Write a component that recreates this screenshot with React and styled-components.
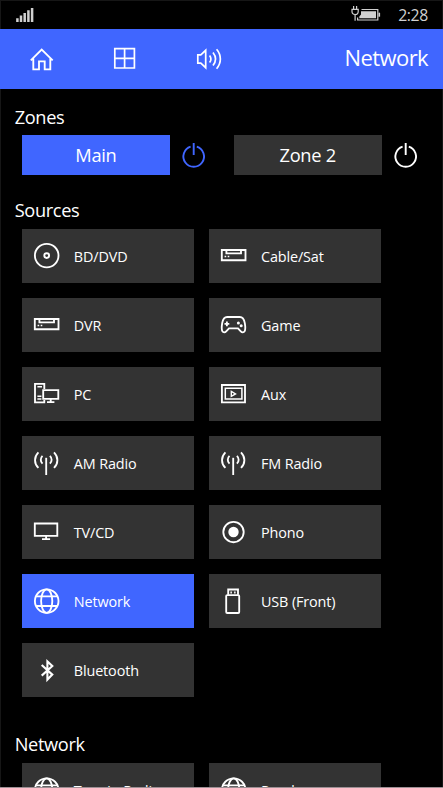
import styled, { createGlobalStyle } from "styled-components";

const GlobalStyle = createGlobalStyle`
* {
    box-sizing: border-box;
}
body {
    margin: 0;
    background: #000;
    overflow: hidden;
}
button {
    border: none;
    margin: 0;
    padding: 0;
    background: none;
    font: inherit;
    color: inherit;
}
`

const Screen = styled.div`
    display: flex;
    flex-direction: column;
    width: 443px;
    height: 788px;
    overflow: hidden;
    background: #000;
    color: #fff;
    font-family: "Open Sans", "Noto Sans", sans-serif;
    box-shadow: inset 1px 1px 0 #161616, inset -1px 0 0 #161616;
    border-bottom: 1px solid #9c8f94;
`
const StatusBar = styled.div`
    display: flex;
    flex: none;
    justify-content: space-between;
    height: 29.3px;
    padding: 0 15px 0 16px;
    color: #d0d0d0;
`
const StatusRight = styled.div`
    display: flex;
    gap: 17px;
`
const Clock = styled.span`
    font-size: 15.8px;
    line-height: 30px;
    letter-spacing: -0.35px;
`
const Header = styled.header`
    display: flex;
    flex: none;
    justify-content: space-between;
    height: 59.3px;
    padding: 0 15px 0 28px;
    background: #4066ff;
`
const HeaderNav = styled.nav`
    display: flex;
    align-items: center;
    gap: 55px;
`
const Title = styled.h1`
    margin: 0;
    font-size: 22px;
    font-weight: 400;
    line-height: 57px;
    letter-spacing: -0.6px;
`
const Section = styled.section`
    flex: none;
    padding: ${props => props.top}px 0 0 22px;
`
const Heading = styled.h2`
    margin: 0 0 ${props => props.gap}px -7.3px;
    font-size: 18.2px;
    font-weight: 400;
    line-height: 24px;
    letter-spacing: -0.35px;
`
const ZoneRow = styled.div`
    display: flex;
    gap: 26.4px;
`
const Zone = styled.div`
    display: flex;
    align-items: center;
    gap: 10.5px;
    width: 185.4px;
`
const ZoneButton = styled.button`
    width: 147.8px;
    height: 39.7px;
    background: ${props => props.$active ? "#4066ff" : "#333"};
    font-size: 18.3px;
    line-height: 38px;
    letter-spacing: -0.3px;
`
const PowerButton = styled.button`
    display: flex;
    color: ${props => props.$active ? "#4066ff" : "#fff"};
`
const Tiles = styled.div`
    display: grid;
    grid-template-columns: 172.3px 172.3px;
    grid-auto-rows: 54.2px;
    gap: 14.75px 14.9px;
`
const Tile = styled.button`
    display: flex;
    align-items: center;
    gap: 12.8px;
    padding-left: 11px;
    background: ${props => props.$active ? "#4066ff" : "#333"};
`
const TileLabel = styled.span`
    padding-top: 1.8px;
    font-size: 14.4px;
    letter-spacing: -0.13px;
    white-space: nowrap;
`
const Glyph = styled.svg`
    display: block;
    flex: none;
    fill: none;
    stroke: currentColor;
    stroke-width: ${props => props.$weight || 1.85};
`

const Disc = () => (
    <>
        <circle cx="13.7" cy="13.6" r="11.8" />
        <circle cx="13.7" cy="13.6" r="2.4" />
    </>
)
const Player = () => (
    <>
        <path d="M1.8 8H25.5V18.2H1.8Z M6.4 8V11.4H21V8" />
        <path d="M4.6 14.6h1.6M7.7 14.6h1.6" strokeWidth="1.5" />
    </>
)
const Gamepad = () => (
    <>
        <path d="M7.2 6H19.8C23.2 6 24.2 8.6 24.8 12.2C25.5 16.2 25.5 18.8 24.6 20.3C23.7 21.7 22 21.6 20.8 20.3L18 17.3H9L6.2 20.3C5 21.6 3.3 21.7 2.4 20.3C1.5 18.8 1.5 16.2 2.2 12.2C2.8 8.6 3.8 6 7.2 6Z" />
        <path d="M4.5 12.8H9.3M6.9 10.4V15.2" />
        <circle cx="18.4" cy="12" r="1.5" fill="currentColor" stroke="none" />
        <circle cx="21.2" cy="14.8" r="1.5" fill="currentColor" stroke="none" />
    </>
)
const Computer = () => (
    <>
        <path d="M11.3 9V3.9H2V22.3H12.2 M11.3 20V22.3" />
        <path d="M10.2 10.1H25.3V18.8H10.2Z M17.7 18.8V22 M14 22.1H21.4" />
        <path d="M4.4 6.7H9M4.4 16.2H8.4M4.4 19H8.4" strokeWidth="1.4" />
    </>
)
const MediaFrame = () => (
    <>
        <path d="M1.9 5H25V22.3H1.9Z" />
        <path d="M5.3 8.3H21.9V19H5.3Z" strokeWidth="1.5" />
        <path d="M11.3 11.4L15.5 13.9L11.3 16.3Z" strokeWidth="1.4" />
    </>
)
const Antenna = () => (
    <>
        <path d="M13.2 8.8V26" />
        <path d="M9.5 6.8C7.2 9 7.2 12.4 9.5 14.7M16.9 6.8C19.2 9 19.2 12.4 16.9 14.7" />
        <path d="M5.4 3.4C.9 8 .9 14.3 5.4 18.9M21 3.4C25.5 8 25.5 14.3 21 18.9" />
    </>
)
const Monitor = () => (
    <path d="M1.8 5.5H24.3V17.8H1.8Z M13.1 17.8V21 M9 21.1H17.1" />
)
const Record = () => (
    <>
        <circle cx="13.5" cy="14" r="10.2" />
        <circle cx="13.5" cy="14" r="5.2" fill="currentColor" stroke="none" />
    </>
)
const Globe = () => (
    <>
        <circle cx="13.7" cy="14.1" r="11.8" />
        <ellipse cx="13.7" cy="14.1" rx="5.6" ry="11.8" />
        <path d="M3.2 9.4H24.2M3.2 19H24.2" />
    </>
)
const UsbStick = () => (
    <>
        <path d="M8.2 7.8V2.5H18V7.8" />
        <rect x="6.2" y="8.1" width="13" height="17.9" rx="1" />
        <path d="M10.4 5.5h1.5M14.1 5.5h1.5" />
    </>
)
const BluetoothRune = () => (
    <path d="M8.7 9L19.3 18.6L14.4 23.6V5.4L19.3 10L8.7 19.6" strokeWidth="2.1" />
)

const sources = [
    { name: "BD/DVD", Icon: Disc },
    { name: "Cable/Sat", Icon: Player },
    { name: "DVR", Icon: Player },
    { name: "Game", Icon: Gamepad },
    { name: "PC", Icon: Computer },
    { name: "Aux", Icon: MediaFrame },
    { name: "AM Radio", Icon: Antenna },
    { name: "FM Radio", Icon: Antenna },
    { name: "TV/CD", Icon: Monitor },
    { name: "Phono", Icon: Record },
    { name: "Network", Icon: Globe, active: true },
    { name: "USB (Front)", Icon: UsbStick },
    { name: "Bluetooth", Icon: BluetoothRune },
]

const services = [
    { name: "TuneIn Radio", Icon: Globe },
    { name: "Pandora", Icon: Globe },
]

function TileGrid({ items }) {
    return (
        <Tiles>
            {items.map(({ name, Icon, active }) => (
                <Tile key={name} $active={active}>
                    <Glyph width="28" height="28"><Icon /></Glyph>
                    <TileLabel>{name}</TileLabel>
                </Tile>
            ))}
        </Tiles>
    )
}

function ZoneControl({ name, active }) {
    return (
        <Zone>
            <ZoneButton $active={active}>{name}</ZoneButton>
            <PowerButton $active={active} aria-label={`${name} power`}>
                <Glyph width="27" height="30" $weight={1.9}>
                    <path d="M10.6 6.7A10.3 10.3 0 1 0 16.8 6.7M13.7 3V15" />
                </Glyph>
            </PowerButton>
        </Zone>
    )
}

export default function App() {
    return (
        <>
        <GlobalStyle />
        <Screen>
            <StatusBar>
                <Glyph width="20" height="29" $weight={2.5}>
                    <path d="M1.4 22V18.2M5 22V15.6M8.7 22V13M12.4 22V10.3M16.1 22V8" />
                </Glyph>
                <StatusRight>
                    <Glyph width="30" height="29" $weight={1.2}>
                        <path d="M10.5 9.5H26.8V20H6.6V17.5" />
                        <path d="M28.3 12.7V16.7" strokeWidth="1.6" />
                        <path d="M10 11.3H25V18.3H8.3V16.4L10 14.4Z" fill="currentColor" stroke="none" />
                        <path d="M2.6 6V9M5.6 6V9M1 9.4H7.2V11.4C7.2 13.3 6.2 14.5 4.1 14.5S1 13.3 1 11.4ZM4.1 14.5V20.8" />
                    </Glyph>
                    <Clock>2:28</Clock>
                </StatusRight>
            </StatusBar>
            <Header>
                <HeaderNav>
                    <Glyph width="28" height="28">
                        <path d="M2.8 15.3L13.7 4.5L24.7 15.3M5.3 13.2V24.3H11V16.4H16.7V24.3H22.3V13.2" />
                    </Glyph>
                    <Glyph width="28" height="28" $weight={1.7}>
                        <path d="M3.8 3.7H23.4V23H3.8ZM13.6 3.7V23M3.8 13.3H23.4" />
                    </Glyph>
                    <Glyph width="30" height="28" $weight={1.7}>
                        <path d="M3.8 9.8H6.8L11.7 5.3V22.7L6.8 18.2H3.8Z" />
                        <path d="M15.6 10.4C17.3 12.7 17.3 15.3 15.6 17.6M19 7.5C22.2 11.6 22.2 16.4 19 20.5M22.6 4.3C27.6 10.2 27.6 17.8 22.6 23.7" />
                    </Glyph>
                </HeaderNav>
                <Title>Network</Title>
            </Header>
            <Section top={16}>
                <Heading gap={6.7}>Zones</Heading>
                <ZoneRow>
                    <ZoneControl name="Main" active />
                    <ZoneControl name="Zone 2" />
                </ZoneRow>
            </Section>
            <Section top={23}>
                <Heading gap={7}>Sources</Heading>
                <TileGrid items={sources} />
            </Section>
            <Section top={35.2}>
                <Heading gap={7}>Network</Heading>
                <TileGrid items={services} />
            </Section>
        </Screen>
        </>
    )
}
